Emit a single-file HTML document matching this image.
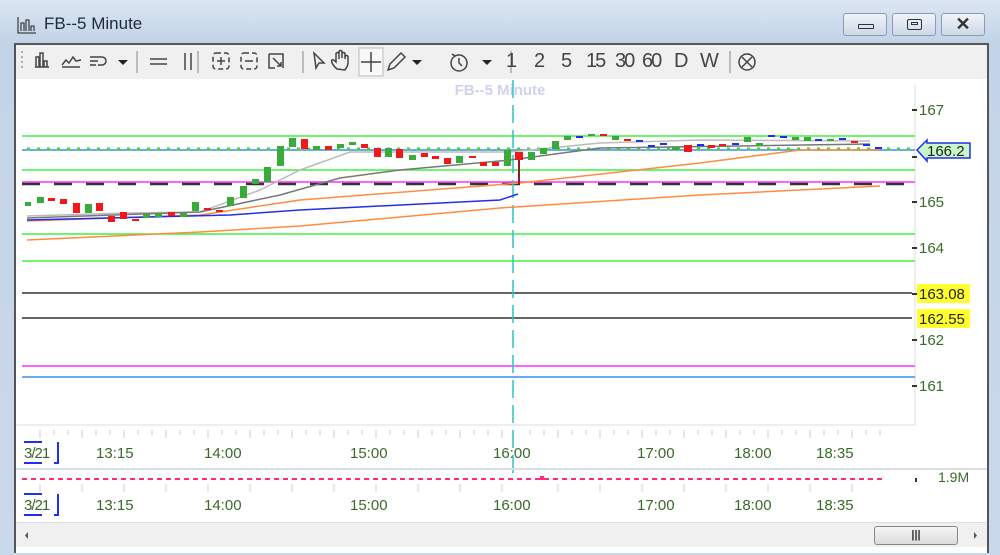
<!DOCTYPE html>
<html><head><meta charset="utf-8"><style>
*{margin:0;padding:0;box-sizing:border-box}
body{width:1000px;height:555px;overflow:hidden;background:linear-gradient(#dbe6f3,#c4d4e8 40px,#c9d8ea);font-family:"Liberation Sans",sans-serif;position:relative}
.t{position:absolute;left:44px;top:14px;font-size:17px;color:#1d2a3a}
.btn{position:absolute;top:13px;width:44px;height:23px;border:1px solid #8a9bb2;border-radius:3px;background:linear-gradient(#f0f4f9,#cdd9e8)}
.inner{position:absolute;left:14px;top:43px;width:975px;height:510px;border:2px solid #555;border-bottom:none;background:#fff}
.tb{position:absolute;left:0;top:0;width:971px;height:34px;background:#f0f0f0;font-size:20px;color:#444}
.tb span{position:absolute;top:5px}
.sb{position:absolute;left:0;top:477px;width:971px;height:25px;background:#f0f0f0;border-top:1px solid #ddd}
</style></head><body>
<svg style="position:absolute;left:16px;top:15px" width="22" height="20"><path d="M2 2V18H20M5 16V8H8V16M10 16V5H13V16M15 16V11H18V16" fill="none" stroke="#444" stroke-width="1.3"/></svg>
<div class="t">FB--5 Minute</div>
<div class="btn" style="left:843px"><div style="position:absolute;left:14px;top:10px;width:16px;height:5px;border:1.5px solid #333;border-radius:1px"></div></div>
<div class="btn" style="left:892px"><div style="position:absolute;left:14px;top:5px;width:15px;height:11px;border:1.5px solid #333;border-radius:2px"><div style="margin:2px 3px;height:3px;border:1px solid #333"></div></div></div>
<div class="btn" style="left:941px;font-size:18px;font-weight:bold;color:#333;text-align:center;line-height:21px">✕</div>
<div class="inner">
<div class="tb">
<svg width="971" height="34" style="position:absolute;left:0;top:0" fill="none" stroke="#444" stroke-width="1.5">
<path d="M6 6v2M6 11v2M6 16v2M6 21v2" stroke="#999"/>
<path d="M20 22V12h3v10M24 22V8h3v14M28 22v-6h3v6M19 22h14"/>
<path d="M46 20l4-5 3 3 4-6 3 4 5-1M46 22h18"/>
<path d="M74 12h12a4 4 0 0 1 0 8h-4M74 16h8M74 20h6"/>
<path d="M102 15h10l-5 5z" fill="#222" stroke="none"/>
<path d="M121 6v22M182 6v22M287 6v22M495 6v22M714 6v22" stroke="#aaa"/>
<path d="M134 14h17M134 19h17M169 8v17M175 8v17"/>
<rect x="197" y="8" width="16" height="16" rx="3" stroke-dasharray="5 3"/><path d="M201 16h8M205 12v8"/>
<rect x="225" y="8" width="16" height="16" rx="3" stroke-dasharray="5 3"/><path d="M229 16h8"/>
<path d="M253 9h14v14M253 9v14h6M257 13l8 8M261 21h4v-4"/>
<path d="M298 8l10 10h-5l-3 5z"/>
<path d="M321 24c-4-3-6-7-5-9 1-1 3 1 4 2V9c0-2 3-2 3 0v5V7c0-2 3-2 3 0v6-4c0-2 3-2 3 0v5-2c0-2 3-2 3 0v6c0 3-2 5-3 7z"/>
<rect x="343" y="3" width="24" height="28" fill="#f8f8f8" stroke="#bbb" stroke-width="1"/>
<path d="M355 7v20M345 17h20"/>
<path d="M372 25l2-6 11-11 4 4-11 11z"/>
<path d="M396 15h10l-5 5z" fill="#222" stroke="none"/>
<circle cx="443" cy="18" r="8"/><path d="M443 13v5l3 3M436 9l3 2"/>
<path d="M466 15h10l-5 5z" fill="#222" stroke="none"/>
<circle cx="731" cy="17" r="8"/><path d="M726 12l10 10M736 12l-10 10"/>
</svg>
<span style="left:490px">1</span><span style="left:518px">2</span><span style="left:545px">5</span><span style="left:570px;letter-spacing:-2px">15</span><span style="left:599px;letter-spacing:-2px">30</span><span style="left:626px;letter-spacing:-2px">60</span><span style="left:658px">D</span><span style="left:684px">W</span>
</div>
<div class="sb">
<svg width="971" height="25"><path d="M12 9v7l-3-3.5z" fill="#555"/><path d="M958 9v7l3-3.5z" fill="#555"/></svg>
<div style="position:absolute;left:858px;top:3px;width:84px;height:19px;border:1px solid #888;border-radius:3px;background:linear-gradient(#f5f5f5,#dcdcdc);text-align:center;font-size:11px;line-height:17px;color:#333;font-weight:bold">|||</div>
</div>
</div>
<svg style="position:absolute;left:0;top:0" width="1000" height="555" font-family="Liberation Sans,sans-serif">
<text x="500" y="95" font-size="15" font-weight="bold" fill="#cfd2ec" text-anchor="middle">FB--5 Minute</text>
<line x1="915" y1="85" x2="915" y2="425" stroke="#ddd"/>
<line x1="16" y1="425" x2="915" y2="425" stroke="#ddd"/>
<g stroke-width="1.6">
<line x1="22" y1="136" x2="915" y2="136" stroke="#3ef03e"/>
<line x1="22" y1="170" x2="915" y2="170" stroke="#3ef03e"/>
<line x1="22" y1="234" x2="915" y2="234" stroke="#3ef03e"/>
<line x1="22" y1="261" x2="915" y2="261" stroke="#3ef03e"/>
<line x1="22" y1="150" x2="915" y2="150" stroke="#3a8ee8"/>
<line x1="22" y1="182" x2="915" y2="182" stroke="#ff30ff"/>
<line x1="22" y1="184" x2="915" y2="184" stroke="#333" stroke-width="2.5" stroke-dasharray="18 14"/>
<line x1="22" y1="293" x2="912" y2="293" stroke="#333"/>
<line x1="22" y1="318" x2="912" y2="318" stroke="#333"/>
<line x1="22" y1="366" x2="915" y2="366" stroke="#ff30ff"/>
<line x1="22" y1="377" x2="915" y2="377" stroke="#3a8ee8"/>
</g>
<line x1="27" y1="149" x2="912" y2="149" stroke="#3ad43a" stroke-width="3" stroke-dasharray="3 7"/>
<line x1="513" y1="80" x2="513" y2="480" stroke="#2bc4c4" stroke-width="1.5" stroke-dasharray="18 7"/>
<g fill="none" stroke-width="1.5">
<polyline stroke="#bbb" points="27,216 130,213 200,212 260,190 300,170 350,152 510,152 600,143 700,140 870,141"/>
<polyline stroke="#777" points="27,218 200,212 280,195 340,178 400,170 510,160 600,148 870,144"/>
<polyline stroke="#ff8c40" points="27,221 200,215 300,200 520,183 700,163 800,150 880,150"/>
<polyline stroke="#2030e8" points="27,220 230,215 300,210 500,200 518,194"/>
<polyline stroke="#ff8c40" points="27,240 200,232 300,226 500,208 700,195 880,186"/>
</g>
<line x1="519" y1="160" x2="519" y2="184" stroke="#8b2020" stroke-width="2"/>
<g id="c">
<g fill="#3aaa3a"><rect x="25" y="202" width="6" height="4"/><rect x="37" y="197" width="7" height="6"/><rect x="85" y="204" width="7" height="9"/><rect x="143" y="214" width="7" height="4"/><rect x="155" y="213" width="7" height="4"/><rect x="180" y="213" width="7" height="4"/><rect x="192" y="202" width="7" height="9"/><rect x="227" y="197" width="7" height="9"/><rect x="240" y="186" width="7" height="12"/><rect x="252" y="179" width="7" height="5"/><rect x="264" y="167" width="7" height="15"/><rect x="277" y="146" width="7" height="20"/><rect x="289" y="138" width="7" height="9"/><rect x="313" y="146" width="7" height="4"/><rect x="337" y="144" width="7" height="4"/><rect x="349" y="142" width="7" height="3"/><rect x="385" y="148" width="7" height="9"/><rect x="409" y="155" width="7" height="5"/><rect x="456" y="156" width="7" height="7"/><rect x="504" y="150" width="7" height="16"/><rect x="528" y="152" width="7" height="8"/><rect x="540" y="148" width="7" height="6"/><rect x="552" y="141" width="7" height="8"/><rect x="564" y="136" width="7" height="4"/><rect x="588" y="134" width="7" height="2"/><rect x="612" y="136" width="7" height="4"/><rect x="672" y="147" width="7" height="3"/><rect x="744" y="137" width="7" height="5"/><rect x="756" y="143" width="7" height="3"/><rect x="792" y="137" width="7" height="3"/><rect x="804" y="137" width="7" height="4"/><rect x="827" y="139" width="7" height="2"/></g>
<g fill="#f01818"><rect x="48" y="198" width="7" height="3"/><rect x="60" y="199" width="7" height="5"/><rect x="73" y="203" width="7" height="10"/><rect x="96" y="203" width="7" height="8"/><rect x="108" y="216" width="7" height="6"/><rect x="120" y="212" width="7" height="7"/><rect x="132" y="219" width="7" height="2"/><rect x="168" y="212" width="7" height="4"/><rect x="204" y="208" width="7" height="2"/><rect x="216" y="210" width="7" height="2"/><rect x="301" y="139" width="7" height="10"/><rect x="325" y="146" width="7" height="4"/><rect x="361" y="144" width="7" height="4"/><rect x="374" y="148" width="7" height="9"/><rect x="396" y="149" width="7" height="9"/><rect x="421" y="153" width="7" height="4"/><rect x="432" y="156" width="7" height="3"/><rect x="444" y="158" width="7" height="6"/><rect x="469" y="156" width="7" height="2"/><rect x="480" y="162" width="7" height="4"/><rect x="492" y="162" width="7" height="4"/><rect x="515" y="152" width="8" height="8"/><rect x="600" y="134" width="7" height="2"/><rect x="624" y="139" width="7" height="2"/><rect x="684" y="145" width="8" height="7"/><rect x="708" y="145" width="7" height="3"/><rect x="719" y="144" width="7" height="2"/><rect x="851" y="141" width="7" height="2"/></g>
<g fill="#2030e8"><rect x="576" y="136" width="7" height="2"/><rect x="636" y="140" width="7" height="2"/><rect x="648" y="145" width="7" height="2"/><rect x="660" y="143" width="7" height="2"/><rect x="697" y="144" width="7" height="2"/><rect x="732" y="143" width="7" height="2"/><rect x="768" y="135" width="7" height="2"/><rect x="780" y="136" width="7" height="2"/><rect x="815" y="139" width="7" height="2"/><rect x="839" y="138" width="7" height="2"/><rect x="863" y="144" width="7" height="2"/><rect x="875" y="147" width="7" height="2"/></g>
</g>
<g font-size="15" fill="#3a6a2a">
<g stroke="#333" stroke-width="2"><line x1="912" y1="110" x2="917" y2="110"/><line x1="912" y1="157" x2="917" y2="157"/><line x1="912" y1="202" x2="917" y2="202"/><line x1="912" y1="248" x2="917" y2="248"/><line x1="912" y1="294" x2="917" y2="294"/><line x1="912" y1="340" x2="917" y2="340"/><line x1="912" y1="386" x2="917" y2="386"/></g>
<text x="919" y="115">167</text><text x="919" y="207">165</text><text x="919" y="253">164</text><text x="919" y="345">162</text><text x="919" y="391">161</text>
<rect x="917" y="284" width="53" height="19" fill="#ffff30"/><text x="919" y="299" fill="#222">163.08</text>
<rect x="917" y="309" width="53" height="19" fill="#ffff30"/><text x="919" y="324" fill="#222">162.55</text>
<path d="M917 150l10-10v3h43v15h-43v3z" fill="#c8f8c8" stroke="#2030e8" stroke-width="1.5"/>
<text x="927" y="156" fill="#222">166.2</text>
</g>
<g stroke="#ccc"><path d="M40 430v8M54 430v5M68 430v5M82 430v8M96 430v5M110 430v5M124 430v8M138 430v5M152 430v5M166 430v8M180 430v5M194 430v5M208 430v8M222 430v5M236 430v5M250 430v8M264 430v5M278 430v5M292 430v8M306 430v5M320 430v5M334 430v8M348 430v5M362 430v5M376 430v8M390 430v5M404 430v5M418 430v8M432 430v5M446 430v5M460 430v8M474 430v5M488 430v5M502 430v8M530 430v5M544 430v5M558 430v8M572 430v5M586 430v5M600 430v8M614 430v5M628 430v5M642 430v8M656 430v5M670 430v5M684 430v8M698 430v5M712 430v5M726 430v8M740 430v5M754 430v5M768 430v8M782 430v5M796 430v5M810 430v8M824 430v5M838 430v5M852 430v8M866 430v5M880 430v5"/>
<path d="M40 484v8M82 484v8M124 484v8M166 484v8M208 484v8M250 484v8M292 484v8M334 484v8M376 484v8M418 484v8M460 484v8M502 484v8M558 484v8M600 484v8M642 484v8M684 484v8M726 484v8M768 484v8M810 484v8M852 484v8"/>
<line x1="16" y1="469" x2="987" y2="469" stroke="#ddd" stroke-width="2"/></g>
<line x1="22" y1="479" x2="885" y2="479" stroke="#ff2a80" stroke-width="2" stroke-dasharray="5 4"/>
<rect x="540" y="476" width="4" height="4" fill="#ff2a80"/>
<rect x="915" y="478" width="2" height="4" fill="#333"/>
<g font-size="15" fill="#3a6a2a">
<text x="938" y="482" font-size="14">1.9M</text>
<text x="24" y="458" letter-spacing="-1">3/21</text><text x="24" y="510" letter-spacing="-1">3/21</text>
<g stroke="#2030e8" stroke-width="2" fill="none"><path d="M24 442h18M24 463h18M58 442v21h-4M24 494h18M24 515h18M58 494v21h-4"/></g>
<text x="96" y="458">13:15</text><text x="204" y="458">14:00</text><text x="350" y="458">15:00</text><text x="493" y="458">16:00</text><text x="637" y="458">17:00</text><text x="734" y="458">18:00</text><text x="816" y="458">18:35</text>
<text x="96" y="510">13:15</text><text x="204" y="510">14:00</text><text x="350" y="510">15:00</text><text x="493" y="510">16:00</text><text x="637" y="510">17:00</text><text x="734" y="510">18:00</text><text x="816" y="510">18:35</text>
</g>
</svg>
</body></html>
